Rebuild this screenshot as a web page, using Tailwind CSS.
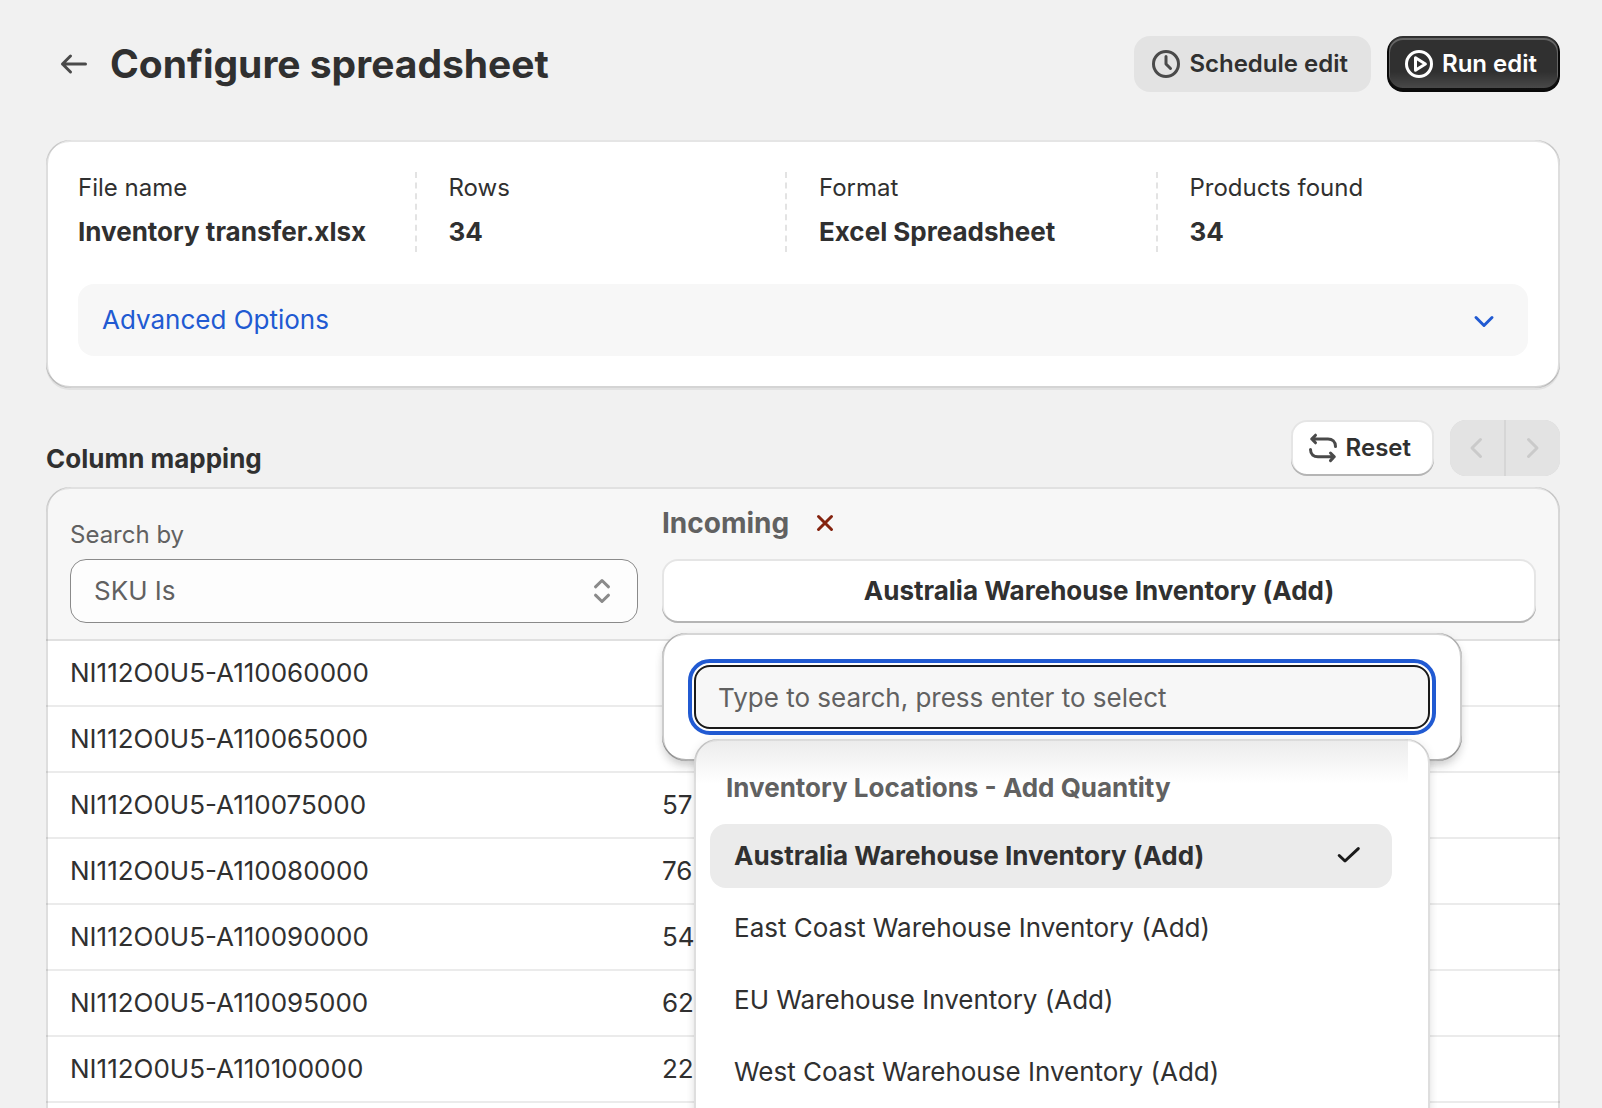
<!DOCTYPE html>
<html lang="en">
<head>
    <meta charset="UTF-8">
    <meta name="viewport" content="width=device-width, initial-scale=1.0">
    <title>Configure spreadsheet</title>
    <script src="https://cdn.jsdelivr.net/npm/@tailwindcss/browser@4"></script>
</head>
<body class="bg-[#f1f1f1] text-[#303030] font-['Inter',sans-serif] text-[26px] leading-[40px]">
<main class="h-screen overflow-hidden pl-[46px] pr-[42px] pt-9">

    <!-- Page header -->
    <header class="flex items-center justify-between h-14">
        <div class="flex items-center gap-4 pl-2">
            <a href="#" aria-label="Back" class="block text-[#4a4a4a]">
                <svg class="size-10" viewBox="0 0 20 20" fill="none" stroke="currentColor" stroke-width="1.5" stroke-linecap="round" stroke-linejoin="round"><path d="M15.75 10H4.25M8.25 6l-4 4 4 4"/></svg>
            </a>
            <h1 class="text-[39px] leading-[48px] font-bold">Configure spreadsheet</h1>
        </div>
        <div class="flex gap-4">
            <button type="button" class="flex items-center gap-[3px] h-14 pl-3 pr-[23px] rounded-2xl bg-[#e3e3e3] text-[24px] font-semibold">
                <svg class="size-10 text-[#4a4a4a]" viewBox="0 0 20 20" fill="none" stroke="currentColor" stroke-width="1.5" stroke-linecap="round" stroke-linejoin="round"><circle cx="10" cy="10" r="6.25"/><path d="M10 6.25V10l2.25 2.25"/></svg>
                Schedule edit
            </button>
            <button type="button" class="flex items-center gap-[3px] h-14 pl-3 pr-[23px] rounded-2xl text-white text-[24px] font-semibold bg-[#303030] bg-linear-to-b from-transparent from-[64%] to-white/15 shadow-[inset_0_-2px_0_2px_rgba(0,0,0,0.8),inset_0_0_0_2px_#303030,inset_0_1px_0_3px_rgba(255,255,255,0.25)]">
                <svg class="size-10" viewBox="0 0 20 20" fill="none" stroke="currentColor" stroke-width="1.5" stroke-linejoin="round"><circle cx="10" cy="10" r="6.25"/><path d="M8.25 6.9v6.2L13.2 10z"/></svg>
                Run edit
            </button>
        </div>
    </header>

    <!-- File summary -->
    <section class="mt-12 p-8 rounded-3xl bg-white shadow-[0_2px_0_rgba(26,26,26,0.07),inset_2px_0_0_rgba(0,0,0,0.13),inset_-2px_0_0_rgba(0,0,0,0.13),inset_0_-2px_0_rgba(0,0,0,0.17),inset_0_2px_0_rgba(204,204,204,0.5)]">
        <dl class="grid grid-cols-4 gap-8">
            <div class="flex flex-col gap-2 border-r-2 border-dashed border-[#e3e3e3]">
                <dt class="text-[24px] leading-[32px]">File name</dt>
                <dd class="font-bold">Inventory transfer.xlsx</dd>
            </div>
            <div class="flex flex-col gap-2 border-r-2 border-dashed border-[#e3e3e3]">
                <dt class="text-[24px] leading-[32px]">Rows</dt>
                <dd class="font-bold">34</dd>
            </div>
            <div class="flex flex-col gap-2 border-r-2 border-dashed border-[#e3e3e3]">
                <dt class="text-[24px] leading-[32px]">Format</dt>
                <dd class="font-bold">Excel Spreadsheet</dd>
            </div>
            <div class="flex flex-col gap-2">
                <dt class="text-[24px] leading-[32px]">Products found</dt>
                <dd class="font-bold">34</dd>
            </div>
        </dl>
        <button type="button" class="mt-8 flex items-center justify-between w-full h-18 px-6 rounded-2xl bg-[#f7f7f7] text-[#215ad2]">
            <span>Advanced Options</span>
            <svg class="size-10" viewBox="0 0 20 20" fill="none" stroke="currentColor" stroke-width="1.5" stroke-linecap="round" stroke-linejoin="round"><path d="M6 8.75 10 12.75l4-4"/></svg>
        </button>
    </section>

    <!-- Column mapping toolbar -->
    <div class="mt-8 flex items-end justify-between">
        <h2 class="leading-[34px] font-bold">Column mapping</h2>
        <div class="flex gap-4">
            <button type="button" class="flex items-center gap-[3px] h-14 pl-3 pr-[23px] rounded-2xl bg-white text-[24px] font-semibold shadow-[inset_0_-2px_0_#b5b5b5,inset_0_0_0_2px_rgba(0,0,0,0.1)]">
                <svg class="size-10 text-[#4a4a4a]" viewBox="0 0 20 20" fill="none" stroke="currentColor" stroke-width="1.5" stroke-linecap="round" stroke-linejoin="round"><path d="M16.25 9.25c0-2.5-1.7-3.75-3.75-3.75H4.5M6.25 3.6 4.35 5.5l1.9 1.9M3.75 10.75c0 2.5 1.7 3.65 3.75 3.65h8M13.75 12.5l1.9 1.9-1.9 1.9"/></svg>
                Reset
            </button>
            <div class="flex gap-[2px] rounded-2xl overflow-hidden bg-[#d6d6d6]">
                <button type="button" disabled aria-label="Previous" class="flex items-center justify-center w-[54px] h-14 bg-[#e3e3e3] text-[#cacaca]">
                    <svg class="size-10" viewBox="0 0 20 20" fill="none" stroke="currentColor" stroke-width="1.5" stroke-linecap="round" stroke-linejoin="round"><path d="M11.75 5.75 7.5 10l4.25 4.25"/></svg>
                </button>
                <button type="button" disabled aria-label="Next" class="flex items-center justify-center w-[54px] h-14 bg-[#e3e3e3] text-[#cacaca]">
                    <svg class="size-10" viewBox="0 0 20 20" fill="none" stroke="currentColor" stroke-width="1.5" stroke-linecap="round" stroke-linejoin="round"><path d="M7.75 5.75 12 10l-4.25 4.25"/></svg>
                </button>
            </div>
        </div>
    </div>

    <!-- Mapping table -->
    <div class="relative mt-[11px] rounded-t-3xl bg-white after:absolute after:inset-0 after:rounded-t-3xl after:pointer-events-none after:shadow-[inset_2px_0_0_rgba(0,0,0,0.13),inset_-2px_0_0_rgba(0,0,0,0.13),inset_0_2px_0_rgba(204,204,204,0.5)]">
        <table class="w-full table-fixed border-separate border-spacing-0 text-left">
            <thead>
                <tr>
                    <th class="w-[604px] pl-6 pr-3 pt-4 pb-4 align-bottom font-normal bg-[#f7f7f7] border-b-2 border-[#e0e0e0] rounded-tl-3xl">
                        <label for="search-by" class="block mb-2 text-[24px] leading-[32px] text-[#616161]">Search by</label>
                        <div class="relative">
                            <select id="search-by" class="block w-full h-16 pl-[23px] pr-14 appearance-none rounded-2xl border border-[#8a8a8a] bg-[#fdfdfd] text-[#616161]">
                                <option>SKU Is</option>
                            </select>
                            <svg class="absolute right-4 top-3 size-10 text-[#8a8a8a] pointer-events-none" viewBox="0 0 20 20" fill="none" stroke="currentColor" stroke-width="1.5" stroke-linecap="round" stroke-linejoin="round"><path d="M6.75 7.9 10 4.75l3.25 3.15M6.75 12.1 10 15.25l3.25-3.15"/></svg>
                        </div>
                    </th>
                    <th class="pl-3 pr-6 pt-4 pb-4 align-bottom font-normal bg-[#f7f7f7] border-b-2 border-[#e0e0e0] rounded-tr-3xl">
                        <div class="flex items-center gap-4 mb-4">
                            <span class="text-[28px] font-bold text-[#616161]">Incoming</span>
                            <button type="button" aria-label="Remove column" class="text-[#84230f]">
                                <svg class="block size-10" viewBox="0 0 20 20" fill="none" stroke="currentColor" stroke-width="1.5" stroke-linecap="round"><path d="m6.75 6.75 6.5 6.5M13.25 6.75l-6.5 6.5"/></svg>
                            </button>
                        </div>
                        <div class="relative">
                            <button type="button" aria-expanded="true" class="block w-full h-16 rounded-2xl bg-white font-bold text-center shadow-[inset_0_-2px_0_#b5b5b5,inset_0_0_0_2px_rgba(0,0,0,0.1)]">Australia Warehouse Inventory (Add)</button>

                            <!-- Location picker -->
                            <div class="absolute z-10 left-0 top-full mt-[10px] w-[800px] p-8 rounded-3xl bg-white shadow-[0_8px_12px_-4px_rgba(26,26,26,0.2),0_2px_8px_rgba(26,26,26,0.08),inset_2px_0_0_rgba(0,0,0,0.2),inset_-2px_0_0_rgba(0,0,0,0.2),inset_0_-2px_0_rgba(0,0,0,0.3),inset_0_2px_0_rgba(204,204,204,0.8)]">
                                <input type="text" aria-label="Search locations" placeholder="Type to search, press enter to select" class="block w-full h-16 px-[22px] rounded-2xl border-2 border-[#1a1a1a] bg-[#f7f7f7] placeholder:text-[#616161] outline-4 outline-offset-2 outline-[#215ad2]">
                                <div class="absolute left-8 right-8 top-[106px] h-[480px] pt-[29px] pl-4 pr-[38px] rounded-3xl bg-white shadow-[0_8px_12px_-4px_rgba(26,26,26,0.15),0_0_10px_rgba(26,26,26,0.07)] before:absolute before:left-0 before:right-[22px] before:top-0 before:h-11 before:rounded-tl-3xl before:bg-linear-to-b before:from-[#ebebeb] before:to-white/0 after:absolute after:inset-0 after:rounded-3xl after:pointer-events-none after:shadow-[inset_2px_0_0_rgba(0,0,0,0.13),inset_-2px_0_0_rgba(0,0,0,0.13),inset_0_2px_0_rgba(204,204,204,0.5)]">
                                    <p class="relative pl-4 mb-4 font-bold text-[#616161]">Inventory Locations - Add Quantity</p>
                                    <ul role="listbox" class="flex flex-col gap-2">
                                        <li role="option" aria-selected="true" class="flex items-center justify-between h-16 px-6 rounded-2xl bg-[#ebebeb] font-bold">
                                            Australia Warehouse Inventory (Add)
                                            <svg class="size-10 text-[#1a1a1a]" viewBox="0 0 20 20" fill="none" stroke="currentColor" stroke-width="1.5" stroke-linecap="round" stroke-linejoin="round"><path d="m5.6 9.75 2.9 2.75 6.65-6.2"/></svg>
                                        </li>
                                        <li role="option" class="flex items-center h-16 px-6 rounded-2xl">East Coast Warehouse Inventory (Add)</li>
                                        <li role="option" class="flex items-center h-16 px-6 rounded-2xl">EU Warehouse Inventory (Add)</li>
                                        <li role="option" class="flex items-center h-16 px-6 rounded-2xl">West Coast Warehouse Inventory (Add)</li>
                                    </ul>
                                </div>
                            </div>
                        </div>
                    </th>
                </tr>
            </thead>
            <tbody class="[&_td]:h-[66px] [&_td]:border-b-2 [&_td]:border-[#ebebeb] [&_td:first-child]:pl-6 [&_td:last-child]:pl-3">
                <tr><td>NI112O0U5-A110060000</td><td></td></tr>
                <tr><td>NI112O0U5-A110065000</td><td></td></tr>
                <tr><td>NI112O0U5-A110075000</td><td>57</td></tr>
                <tr><td>NI112O0U5-A110080000</td><td>76</td></tr>
                <tr><td>NI112O0U5-A110090000</td><td>54</td></tr>
                <tr><td>NI112O0U5-A110095000</td><td>62</td></tr>
                <tr><td>NI112O0U5-A110100000</td><td>22</td></tr>
                <tr><td></td><td></td></tr>
            </tbody>
        </table>
    </div>
</main>
</body>
</html>
